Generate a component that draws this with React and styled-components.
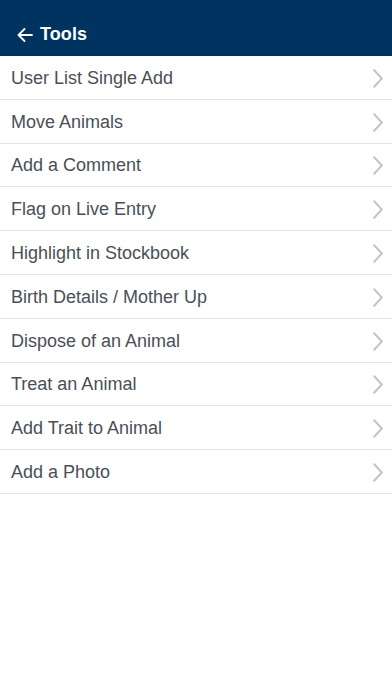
import React from "react";
import styled, { createGlobalStyle } from "styled-components";

const Global = createGlobalStyle`
  html, body { margin: 0; padding: 0; background: #fff; }
  body { font-family: "Liberation Sans", Arial, Helvetica, sans-serif; }
  * { box-sizing: border-box; }
`;

const Page = styled.div`
  width: 392px;
  min-height: 696px;
  background: #ffffff;
  display: flex;
  flex-direction: column;
`;

const Header = styled.header`
  height: 56px;
  background: #003460;
  display: flex;
  align-items: center;
  padding: 13px 0 0 16px;
  gap: 6px;
  color: #ffffff;
`;

const BackArrow = styled.svg`
  width: 18px;
  height: 18px;
  flex: none;
`;

const Title = styled.h1`
  margin: 0;
  font-size: 18px;
  font-weight: 700;
  letter-spacing: 0.1px;
`;

const List = styled.ul`
  list-style: none;
  margin: 0;
  padding: 0;
`;

const Row = styled.li`
  height: 43.8px;
  display: flex;
  align-items: center;
  justify-content: space-between;
  padding: 2px 9px 0 11px;
  border-bottom: 1px solid #e3e3e5;
  color: #4a4f57;
  font-size: 18px;
`;

const Chevron = styled.svg`
  width: 10px;
  height: 19px;
  flex: none;
`;

const items = [
  "User List Single Add",
  "Move Animals",
  "Add a Comment",
  "Flag on Live Entry",
  "Highlight in Stockbook",
  "Birth Details / Mother Up",
  "Dispose of an Animal",
  "Treat an Animal",
  "Add Trait to Animal",
  "Add a Photo",
];

export default function App() {
  return (
    <Page>
      <Global />
      <Header>
        <BackArrow viewBox="0 0 18 18" fill="none" stroke="#fff" strokeWidth="1.8" strokeLinecap="round" strokeLinejoin="round">
          <path d="M16 9H2.5M8.5 3L2.5 9l6 6" />
        </BackArrow>
        <Title>Tools</Title>
      </Header>
      <List>
        {items.map((t) => (
          <Row key={t}>
            <span>{t}</span>
            <Chevron viewBox="0 0 10 19" fill="none" stroke="#c4c4c8" strokeWidth="2" strokeLinecap="round" strokeLinejoin="round">
              <path d="M1.2 1.2L8.8 9.5 1.2 17.8" />
            </Chevron>
          </Row>
        ))}
      </List>
    </Page>
  );
}
